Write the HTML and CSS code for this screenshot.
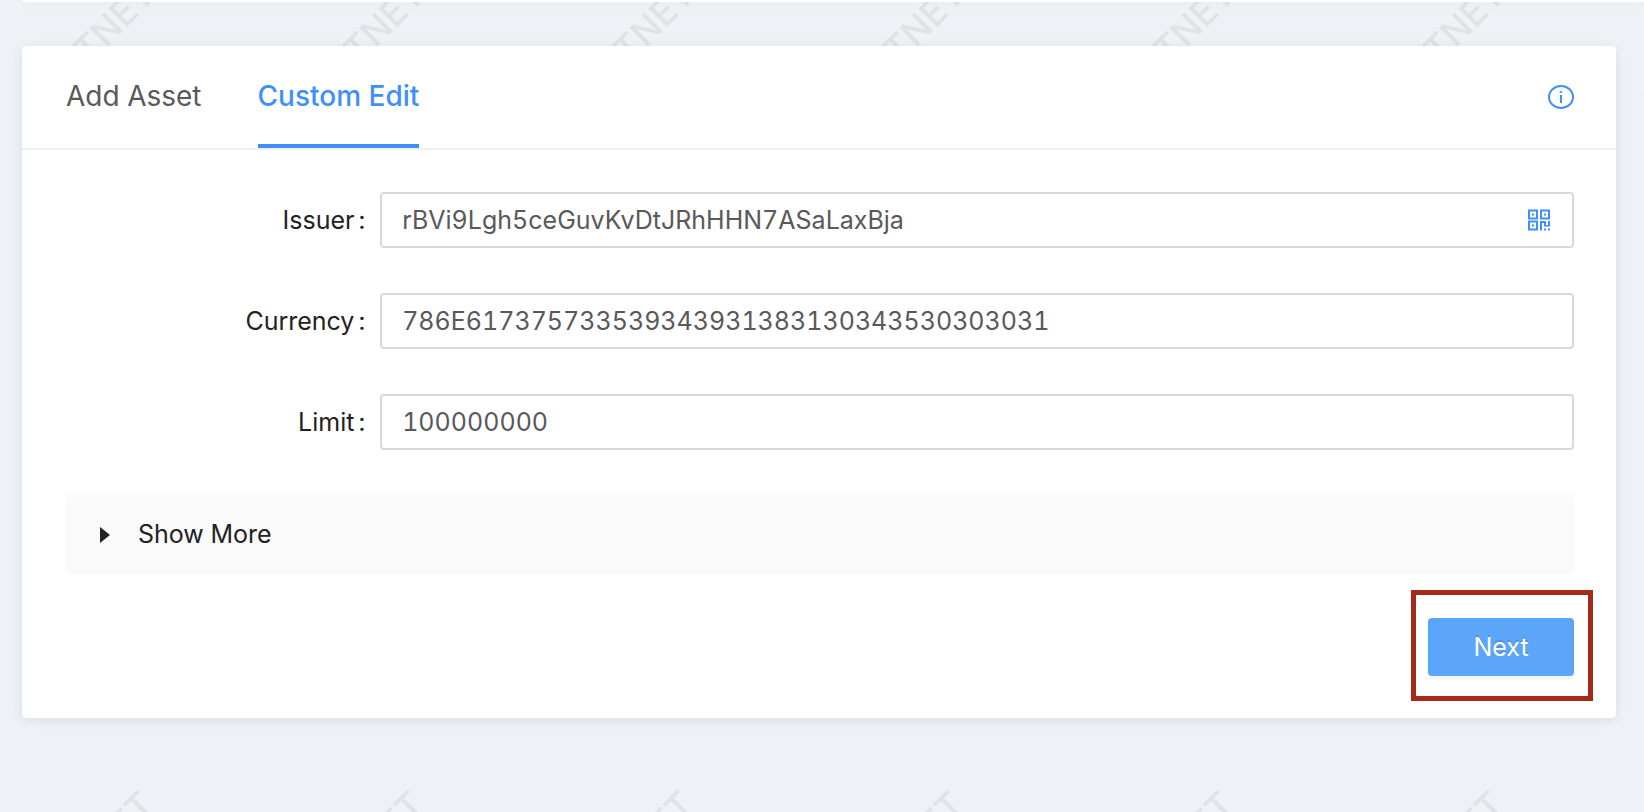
FILE: index.html
```html
<!DOCTYPE html>
<html lang="en">
<head>
    <meta charset="UTF-8">
    <meta name="viewport" content="width=device-width, initial-scale=1.0">
    <title>Add Asset</title>
    <link rel="stylesheet" href="styles.css">
</head>
<body>
    <svg class="watermark" aria-hidden="true">
        <defs>
            <pattern id="mark" x="0" y="-30" width="270" height="270" patternUnits="userSpaceOnUse">
                <text class="watermark-text" text-anchor="end" transform="translate(157 27) rotate(-45)">TESTNET</text>
            </pattern>
        </defs>
        <rect width="100%" height="100%" fill="url(#mark)"/>
    </svg>

    <div class="top-panel"></div>

    <main class="card">
        <header class="card-head">
            <div class="tabs" role="tablist">
                <button class="tab" type="button" role="tab" aria-selected="false">Add Asset</button>
                <button class="tab active" type="button" role="tab" aria-selected="true">Custom Edit</button>
            </div>
            <button class="icon-button" type="button" aria-label="Info">
                <svg width="26" height="24" viewBox="0 0 26 24" fill="none">
                    <ellipse cx="13" cy="12" rx="12" ry="11" stroke="currentColor" stroke-width="2"/>
                    <ellipse cx="13" cy="7" rx="1.5" ry="1.1" fill="currentColor"/>
                    <path d="M13 10v8" stroke="currentColor" stroke-width="2"/>
                </svg>
            </button>
        </header>

        <form class="card-body">
            <div class="form-row">
                <label class="form-label" for="issuer">Issuer<span class="colon">:</span></label>
                <div class="form-field">
                    <input class="form-input" type="text" id="issuer" value="rBVi9Lgh5ceGuvKvDtJRhHHN7ASaLaxBja">
                    <button class="icon-button" type="button" aria-label="Scan QR code">
                        <svg width="24" height="22" viewBox="0 0 24 22" fill="none" stroke="currentColor">
                            <g stroke-width="2">
                                <path d="M2 1.5h8v8H2z"/>
                                <path d="M14 1.5h8v8h-8z"/>
                                <path d="M2 12.5h8v8H2z"/>
                            </g>
                            <g fill="currentColor" stroke="none">
                                <path d="M5 4.5h2v2H5z"/>
                                <path d="M17 4.5h2v2h-2z"/>
                                <path d="M5 15.5h2v2H5z"/>
                                <path d="M13 12h6v4h2v-4h2v5.500h-6V14h-2v7.500h-2z"/>
                                <path d="M17 19.500h2v2h-2z"/>
                                <path d="M21 19.500h2v2h-2z"/>
                            </g>
                        </svg>
                    </button>
                </div>
            </div>
            <div class="form-row">
                <label class="form-label" for="currency">Currency<span class="colon">:</span></label>
                <div class="form-field">
                    <input class="form-input" type="text" id="currency" value="786E617375733539343931383130343530303031">
                </div>
            </div>
            <div class="form-row">
                <label class="form-label" for="limit">Limit<span class="colon">:</span></label>
                <div class="form-field">
                    <input class="form-input" type="text" id="limit" value="100000000">
                </div>
            </div>

            <details class="more">
                <summary class="more-head">
                    <svg width="10" height="16" viewBox="0 0 10 16"><path d="M0 0l10 8-10 8z" fill="currentColor"/></svg>
                    Show More
                </summary>
            </details>

            <div class="actions">
                <button class="next-button" type="submit">Next</button>
            </div>
        </form>
    </main>
</body>
</html>
```

FILE: styles.css
```css
* {
    box-sizing: border-box;
    margin: 0;
    padding: 0;
}

body {
    font-family: Inter, "Liberation Sans", sans-serif;
    font-size: 25px;
    font-feature-settings: "tnum";
    line-height: 39px;
    color: #222;
    background-color: #f0f1f6;
    min-height: 100vh;
}
button,
input {
    font: inherit;
    font-feature-settings: inherit;
    color: inherit;
}

.watermark {
    position: absolute;
    top: 0;
    left: 0;
    width: 100%;
    height: 100%;
    z-index: -1;
}
.watermark-text {
    font-size: 36px;
    font-weight: 500;
    fill: #e1e2e6;
}

.top-panel {
    height: 2px;
    margin-left: 22px;
    background-color: #fff;
    border-radius: 0 0 0 4px;
    box-shadow: 0 2px 12px rgba(0, 20, 40, 0.09);
}

.card {
    margin: 44px 28px 0 22px;
    background-color: #fff;
    border-radius: 4px;
    box-shadow: 0 2px 12px rgba(0, 20, 40, 0.09);
}
.card-head {
    display: flex;
    justify-content: space-between;
    align-items: center;
    padding: 0 42px 0 44px;
    border-bottom: 2px solid #f0f0f0;
}
.tabs {
    display: flex;
    gap: 56px;
}
.tab {
    padding: 31px 0 28px;
    font-size: 28px;
    color: #595959;
    background: none;
    border: none;
    border-bottom: 4px solid transparent;
    cursor: pointer;
}
.tab.active {
    font-weight: 500;
    color: #3f8ffb;
    border-bottom-color: #3f8ffb;
}
.icon-button {
    display: flex;
    color: #3f8ffb;
    background: none;
    border: none;
    cursor: pointer;
}

.card-body {
    display: flex;
    flex-direction: column;
    padding: 42px 42px 42px 44px;
}
.form-row {
    display: grid;
    grid-template-columns: 5fr 19fr;
    align-items: center;
    margin-bottom: 45px;
}
.form-label {
    padding-right: 15px;
    text-align: right;
}
.colon {
    margin-left: 4px;
}
.form-field {
    display: flex;
    align-items: center;
    height: 56px;
    padding: 0 21px 0 20px;
    border: 2px solid #d9d9d9;
    border-radius: 4px;
}
.form-input {
    flex: 1;
    min-width: 0;
    color: #595959;
    background: none;
    border: none;
    outline: none;
}

.more {
    background-color: #fafafa;
    border-radius: 4px;
}
.more-head {
    display: flex;
    align-items: center;
    gap: 28px;
    padding: 20px 34px;
    list-style: none;
    cursor: pointer;
}

.actions {
    display: flex;
    justify-content: flex-end;
    margin-top: 44px;
}
.next-button {
    position: relative;
    width: 146px;
    height: 58px;
    color: #fff;
    background-color: #5ba6f9;
    border: none;
    border-radius: 4px;
    box-shadow: 0 4px 0 rgba(0, 0, 0, 0.04);
    text-shadow: 0 -2px 0 rgba(0, 0, 0, 0.12);
    cursor: pointer;
}
/* highlight frame around the button */
.next-button::after {
    content: "";
    position: absolute;
    inset: -28px -19px -25px -17px;
    border: 5px solid #a62a18;
}
```
